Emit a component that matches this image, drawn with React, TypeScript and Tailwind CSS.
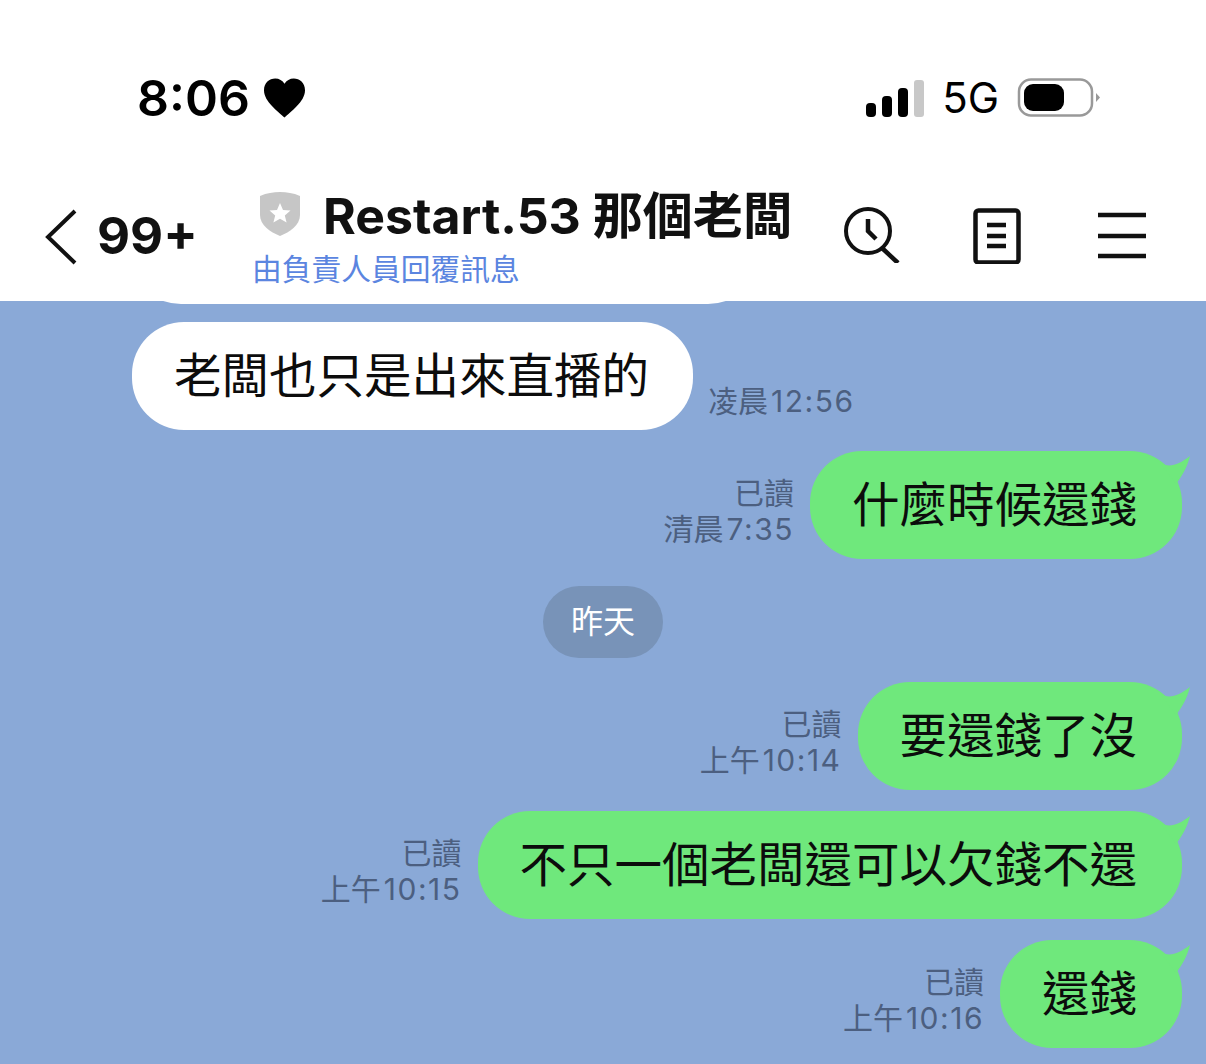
import type { ReactNode } from 'react';

const cjk = "font-['Inter','Noto_Sans_CJK_TC',sans-serif]";

const SignalBars = () => (
  <svg width="58" height="38" viewBox="0 0 58 38" aria-hidden="true">
    <rect x="0" y="24" width="10" height="14" rx="4" fill="#000" />
    <rect x="16" y="17" width="10" height="21" rx="4" fill="#000" />
    <rect x="32" y="9" width="10" height="29" rx="4" fill="#000" />
    <rect x="48" y="1" width="10" height="37" rx="3" fill="#c8c8c8" />
  </svg>
);

const Battery = () => (
  <svg width="84" height="40" viewBox="0 0 84 40" aria-hidden="true">
    <rect x="2" y="1.5" width="73" height="36" rx="12" fill="none" stroke="#999" strokeWidth="2.5" />
    <rect x="7" y="6" width="40" height="27" rx="9" fill="#000" />
    <path d="M79 15 L83 19.5 L79 24 Z" fill="#999" />
  </svg>
);

const Heart = () => (
  <svg width="41" height="40" viewBox="0 0 42 40" aria-hidden="true">
    <path d="M21 40 C15 34 0 24 0 12 C0 4.5 5.5 0 11.5 0 C15.5 0 19 2 21 5.5 C23 2 26.5 0 30.5 0 C36.5 0 42 4.5 42 12 C42 24 27 34 21 40 Z" fill="#000" />
  </svg>
);

const OfficialBadge = () => (
  <svg width="42" height="46" viewBox="0 0 42 46" aria-hidden="true">
    <path d="M1 5 C8 2 14 1 21 1 C28 1 34 2 41 5 V24 C41 34 31 41 21 45 C11 41 1 34 1 24 Z" fill="#c6c6c6" />
    <path d="M21 12 L24 19 L31.5 19.6 L25.8 24.4 L27.6 31.6 L21 27.7 L14.4 31.6 L16.2 24.4 L10.5 19.6 L18 19 Z" fill="#fff" />
  </svg>
);

const HistorySearchIcon = () => (
  <svg width="58" height="58" viewBox="0 0 58 58" fill="none" stroke="#111" strokeWidth="4" aria-hidden="true">
    <circle cx="25" cy="26" r="22" />
    <path d="M25 14 V26 L33 34" strokeWidth="4.5" />
    <path d="M39 43 L55 58" strokeWidth="4.5" />
  </svg>
);

const NoteIcon = () => (
  <svg width="48" height="56" viewBox="0 0 48 56" fill="none" aria-hidden="true">
    <rect x="2.5" y="2.5" width="43" height="52" rx="3" stroke="#111" strokeWidth="4.5" />
    <path d="M14 17 H33 M14 28 H33 M14 38 H33" stroke="#111" strokeWidth="4.5" />
  </svg>
);

const MenuIcon = () => (
  <svg width="48" height="48" viewBox="0 0 48 48" aria-hidden="true">
    <path d="M0 3 H48 M0 24 H48 M0 44 H48" stroke="#111" strokeWidth="4.5" />
  </svg>
);

const BackIcon = () => (
  <svg width="34" height="56" viewBox="0 0 34 56" fill="none" aria-hidden="true">
    <path d="M31 2 L4 28 L31 54" stroke="#111" strokeWidth="4" />
  </svg>
);

const Meta = ({ read, period, clock }: { read?: boolean; period: string; clock: string }) => (
  <div className="flex flex-col items-end text-[30px] leading-[36px] text-[#4c5f80]">
    {read && <span>已讀</span>}
    <span className="flex gap-[3px]">
      <span>{period}</span>
      <span className="tracking-[1.5px]">{clock}</span>
    </span>
  </div>
);

const OutBubble = ({ children }: { children: ReactNode }) => (
  <div className="relative h-[108px] flex items-center rounded-[52px] bg-[#6fe87c] pl-[42px] pr-[45px] text-[47.5px] leading-none text-[#0c0c0c]">
    {children}
    <svg className="absolute right-[-8px] top-[3px]" width="50" height="40" viewBox="0 0 50 40" aria-hidden="true">
      <path d="M20 9 C30 14 38 11 50 2 C47 14 42 22 36 30 Z" fill="#6fe87c" />
    </svg>
  </div>
);

const OutRow = ({ period, clock, text, mt }: { period: string; clock: string; text: string; mt: string }) => (
  <div className={`flex items-center justify-end gap-[16px] pr-[24px] ${mt}`}>
    <div className="pt-[12px]">
      <Meta read period={period} clock={clock} />
    </div>
    <OutBubble>{text}</OutBubble>
  </div>
);

export default function App() {
  return (
    <div className={`h-[1064px] w-[1206px] overflow-hidden bg-[#8aa9d7] ${cjk}`}>
      {/* Status bar + header */}
      <div className="h-[301px] bg-white">
        <div className="flex h-[176px] items-start justify-between pl-[137px] pr-[105px] pt-[70px]">
          <div className="flex items-center gap-[14px] text-[50px] font-semibold leading-[56px] text-black">
            <span>8:06</span>
            <Heart />
          </div>
          <div className="flex items-center gap-[18px]">
            <SignalBars />
            <span className="text-[42px] leading-[56px] text-black">5G</span>
            <Battery />
          </div>
        </div>
        <div className="flex h-[125px] items-start pl-[44px]">
          <div className="mt-[33px]">
            <BackIcon />
          </div>
          <span className="ml-[19px] mt-[30px] w-[100px] text-[51px] font-bold leading-[60px] text-[#111]">99+</span>
          <div className="ml-[55px] mt-[14px] flex w-[560px] flex-col">
            <div className="flex items-center gap-[22px] pl-[7px]">
              <div className="mb-[4px]">
                <OfficialBadge />
              </div>
              <span className="whitespace-nowrap text-[50px] font-bold leading-[52px] text-[#111]">Restart.53 那個老闆</span>
            </div>
            <span className="mt-[9px] text-[29.75px] leading-[36px] text-[#5b85e0]">由負責人員回覆訊息</span>
          </div>
          <div className="ml-[31px] mt-[29px]">
            <HistorySearchIcon />
          </div>
          <div className="ml-[72px] mt-[32px]">
            <NoteIcon />
          </div>
          <div className="ml-[77px] mt-[36px]">
            <MenuIcon />
          </div>
        </div>
      </div>

      {/* Chat */}
      <div className="relative">
        {/* bottom edge of the previous bubble, scrolled under the header */}
        <div className="absolute left-[127px] top-0 h-[3px] w-[635px] overflow-hidden">
          <div className="mt-[-105px] h-[108px] rounded-[54px] bg-white" />
        </div>
        <div className="flex items-end gap-[15px] pl-[132px] pt-[21px]">
          <div className="flex h-[108px] items-center rounded-[52px] bg-white pl-[42px] pr-[44px] text-[47.5px] leading-none text-[#0c0c0c]">
            老闆也只是出來直播的
          </div>
          <div className="pb-[11px]">
            <Meta period="凌晨" clock="12:56" />
          </div>
        </div>

        <OutRow mt="mt-[21px]" period="清晨" clock="7:35" text="什麼時候還錢" />

        <div className="mt-[27px] flex justify-center">
          <div className="flex h-[72px] w-[120px] items-center justify-center rounded-full bg-[#7893b8] text-[32px] text-white">
            昨天
          </div>
        </div>

        <OutRow mt="mt-[24px]" period="上午" clock="10:14" text="要還錢了沒" />
        <OutRow mt="mt-[21px]" period="上午" clock="10:15" text="不只一個老闆還可以欠錢不還" />
        <OutRow mt="mt-[21px]" period="上午" clock="10:16" text="還錢" />
      </div>
    </div>
  );
}
